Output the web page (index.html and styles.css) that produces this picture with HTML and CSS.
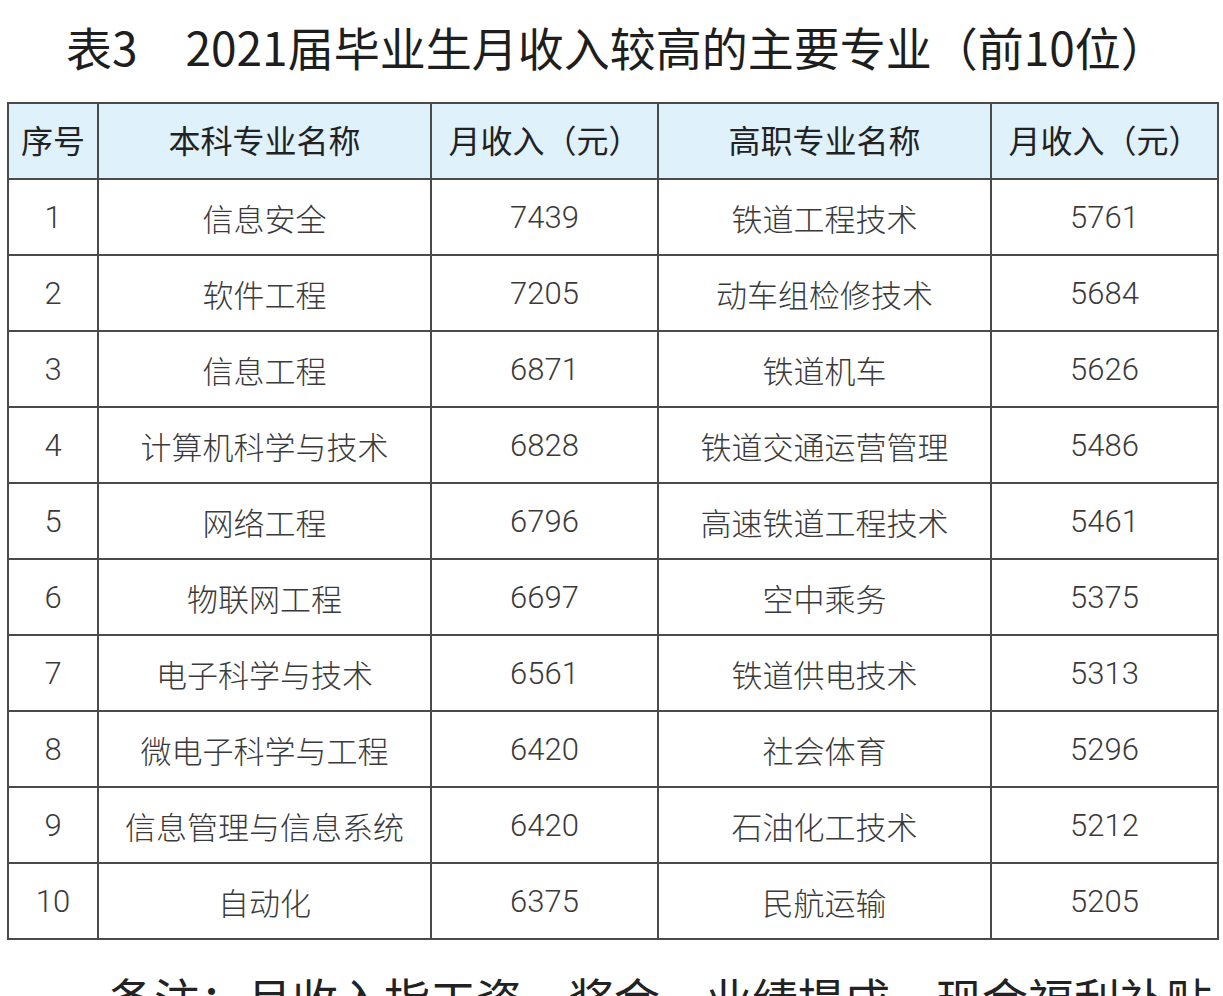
FILE: index.html
```html
<!DOCTYPE html>
<html lang="zh">
<head>
<meta charset="utf-8">
<title>表3</title>
<link rel="stylesheet" href="styles.css">
</head>
<body>
<div class="page">
  <h1 class="title">表3<span class="gap"></span>2021届毕业生月收入较高的主要专业（前10位）</h1>
  <table class="data">
    <colgroup>
      <col class="c-no"><col class="c-name"><col class="c-num"><col class="c-name"><col class="c-num">
    </colgroup>
    <thead>
      <tr><th>序号</th><th>本科专业名称</th><th>月收入（元）</th><th>高职专业名称</th><th>月收入（元）</th></tr>
    </thead>
    <tbody>
      <tr><td>1</td><td>信息安全</td><td>7439</td><td>铁道工程技术</td><td>5761</td></tr>
      <tr><td>2</td><td>软件工程</td><td>7205</td><td>动车组检修技术</td><td>5684</td></tr>
      <tr><td>3</td><td>信息工程</td><td>6871</td><td>铁道机车</td><td>5626</td></tr>
      <tr><td>4</td><td>计算机科学与技术</td><td>6828</td><td>铁道交通运营管理</td><td>5486</td></tr>
      <tr><td>5</td><td>网络工程</td><td>6796</td><td>高速铁道工程技术</td><td>5461</td></tr>
      <tr><td>6</td><td>物联网工程</td><td>6697</td><td>空中乘务</td><td>5375</td></tr>
      <tr><td>7</td><td>电子科学与技术</td><td>6561</td><td>铁道供电技术</td><td>5313</td></tr>
      <tr><td>8</td><td>微电子科学与工程</td><td>6420</td><td>社会体育</td><td>5296</td></tr>
      <tr><td>9</td><td>信息管理与信息系统</td><td>6420</td><td>石油化工技术</td><td>5212</td></tr>
      <tr><td>10</td><td>自动化</td><td>6375</td><td>民航运输</td><td>5205</td></tr>
    </tbody>
  </table>
  <p class="note">备注：月收入指工资、奖金、业绩提成、现金福利补贴</p>
</div>
</body>
</html>
```

FILE: styles.css
```css
html, body {
  margin: 0;
  padding: 0;
  background: #ffffff;
}
.page {
  width: 1223px;
  height: 996px;
  overflow: hidden;
  font-family: "Noto Sans CJK SC", "Noto Sans", sans-serif;
  color: #222;
}
.title {
  margin: 0;
  height: 102px;
  box-sizing: border-box;
  padding-top: 16px;
  padding-left: 66px;
  font-size: 46px;
  line-height: 60px;
  font-weight: 400;
  color: #1e1e1e;
  letter-spacing: 0;
  white-space: nowrap;
}
.gap {
  display: inline-block;
  width: 48px;
}
.data {
  margin-left: 7px;
  width: 1210px;
  border-collapse: collapse;
  table-layout: fixed;
}
.c-no { width: 90px; }
.c-name { width: 333px; }
.c-num { width: 227px; }
.data th, .data td {
  border: 2px solid #4a4a4a;
  text-align: center;
  vertical-align: middle;
  padding: 0;
  height: 74px;
  white-space: nowrap;
}
.data th {
  background: #dff1fa;
  font-size: 32px;
  font-weight: 400;
  color: #222;
  height: 70px;
  padding-bottom: 4px;
}
.data td {
  font-family: Roboto, "Noto Sans CJK SC", sans-serif;
  font-size: 31px;
  font-weight: 300;
  color: #3a3a3a;
}
.note {
  margin: 27px 0 0 108px;
  font-size: 46px;
  line-height: 60px;
  font-weight: 400;
  color: #222;
  white-space: nowrap;
}
```
